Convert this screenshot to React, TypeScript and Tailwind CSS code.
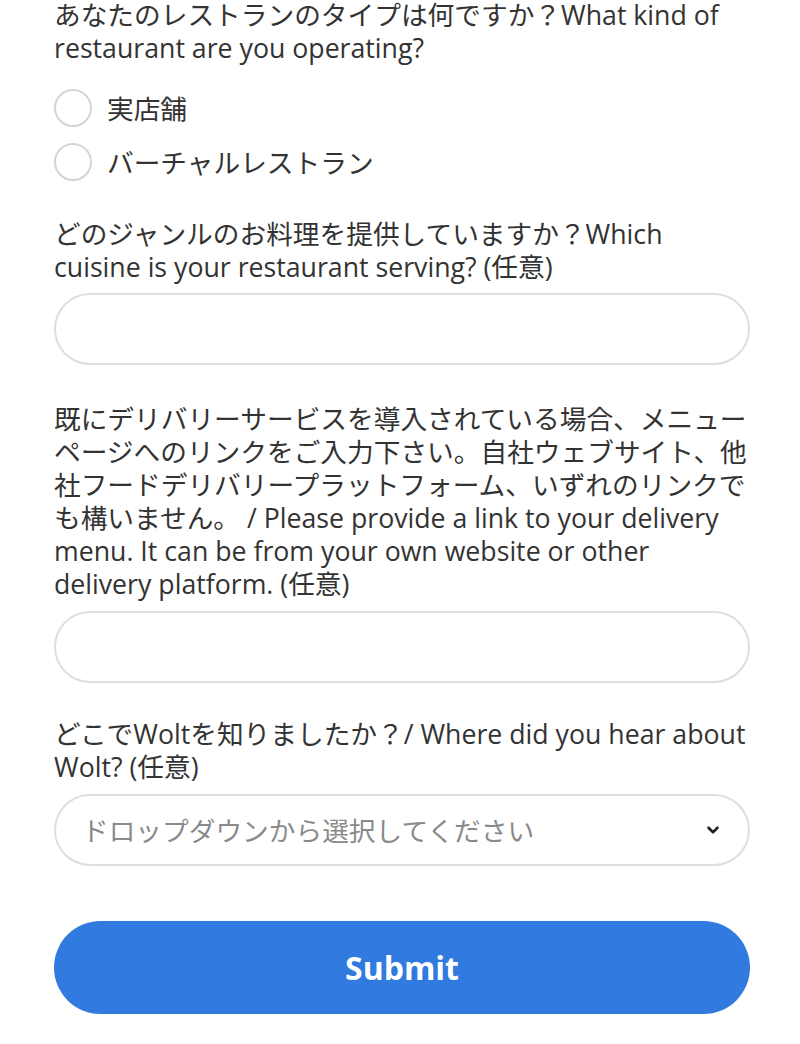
import { ChevronDown } from 'lucide-react';

const font = { fontFamily: '"Open Sans", "Noto Sans CJK JP", sans-serif' };

function Radio({ label }: { label: string }) {
  return (
    <label className="flex items-center gap-[15px] h-[54px]">
      <span className="w-[38px] h-[38px] rounded-full border-2 border-[#d4d4d4] bg-white shrink-0" />
      <span>{label}</span>
    </label>
  );
}

function TextInput() {
  return <div className="h-[72px] rounded-full border-2 border-[#dedede] bg-white" />;
}

export default function App() {
  return (
    <div className="bg-white min-h-[1044px] overflow-hidden">
      <div className="pl-[54px] pr-[50px] text-[26.7px] text-[#333333] leading-[33px]" style={font}>
        <div className="-mt-[2px] -mr-[4px]">
          あなたのレストランのタイプは何ですか？What kind of restaurant are you operating?
        </div>
        <div className="mt-[17px] flex flex-col">
          <Radio label="実店舗" />
          <Radio label="バーチャルレストラン" />
        </div>
        <div className="mt-[28px] -mr-[4px]">
          どのジャンルのお料理を提供していますか？Which cuisine is your restaurant serving? (任意)
        </div>
        <div className="mt-[10px]">
          <TextInput />
        </div>
        <div className="mt-[37px]">
          既にデリバリーサービスを導入されている場合、メニューページへのリンクをご入力下さい。自社ウェブサイト、他社フードデリバリープラットフォーム、いずれのリンクでも構いません。 / Please provide a link to your delivery menu. It can be from your own website or other delivery platform. (任意)
        </div>
        <div className="mt-[11px]">
          <TextInput />
        </div>
        <div className="mt-[34px] -mr-[4px]">
          どこでWoltを知りましたか？/ Where did you hear about Wolt? (任意)
        </div>
        <div className="mt-[11px] h-[72px] rounded-full border-2 border-[#dedede] bg-white flex items-center justify-between pl-[26px] pr-[26px]">
          <span className="text-[#8a8a8a]">ドロップダウンから選択してください</span>
          <ChevronDown size={18} strokeWidth={3.5} className="text-[#222]" />
        </div>
        <button className="mt-[55px] w-full h-[93px] rounded-full bg-[#307ae0] text-white text-[32px] font-bold">
          Submit
        </button>
      </div>
    </div>
  );
}
